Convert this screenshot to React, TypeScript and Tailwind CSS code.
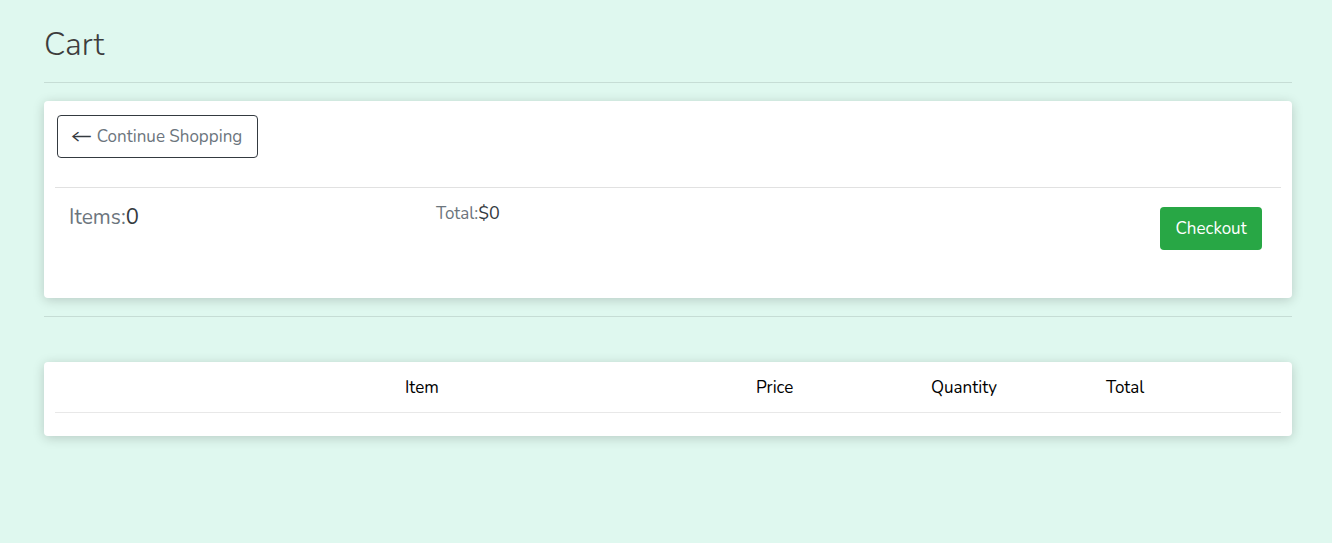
import React from "react";

export default function App() {
  const font = { fontFamily: '"Nunito", Lato, "Noto Sans", sans-serif' };
  return (
    <div className="min-h-[543px] bg-[#dff8ef] pl-[44px] pr-[40px] pt-[24px] pb-10" style={font}>
      <h1 className="text-[32px] font-light leading-[42px] text-[#3d3d3d]">Cart</h1>
      <hr className="mt-[16px] border-0 border-t border-[#c6ddd5]" />
      <div className="mt-[18px] rounded-[4px] bg-white px-[11px] pt-[14px] pb-[21px] shadow-[0_2px_12px_rgba(0,0,0,0.18)]">
        <div className="pl-[2px]">
          <button className="flex h-[43px] w-[201px] items-center justify-center rounded-[4px] border border-[#343a40] text-[17px] text-[#6c757d]">
            <span className="mr-[7px] scale-x-[1.25] text-[#343a40]">←</span>Continue Shopping
          </button>
        </div>
        <hr className="mt-[29px] border-0 border-t border-[#e1e1e1]" />
        <div className="flex items-start pt-[14px] h-[89px]">
          <div className="w-[381px] pl-[14px] text-[21px] text-[#6c757d] leading-[30px]">
            Items:<span className="text-[22px] text-[#343a40]">0</span>
          </div>
          <div className="flex-1 text-[17px] text-[#6c757d] leading-[22px]">
            Total:<span className="text-[18px] text-[#343a40]">$0</span>
          </div>
          <button className="mt-[5px] mr-[19px] flex h-[43px] w-[102px] items-center justify-center rounded-[4px] bg-[#28a745] text-[17px] text-white">
            Checkout
          </button>
        </div>
      </div>
      <hr className="mt-[18px] border-0 border-t border-[#c6ddd5]" />
      <div className="mt-[45px] rounded-[4px] bg-white px-[11px] pb-[23px] shadow-[0_2px_12px_rgba(0,0,0,0.18)]">
        <div className="grid grid-cols-[350px_351px_175px_175px_1fr] border-b border-[#e8e8e8] text-[17px] text-black h-[51px] items-center pt-[1px]">
          <div></div>
          <div>Item</div>
          <div>Price</div>
          <div>Quantity</div>
          <div>Total</div>
        </div>
      </div>
    </div>
  );
}
